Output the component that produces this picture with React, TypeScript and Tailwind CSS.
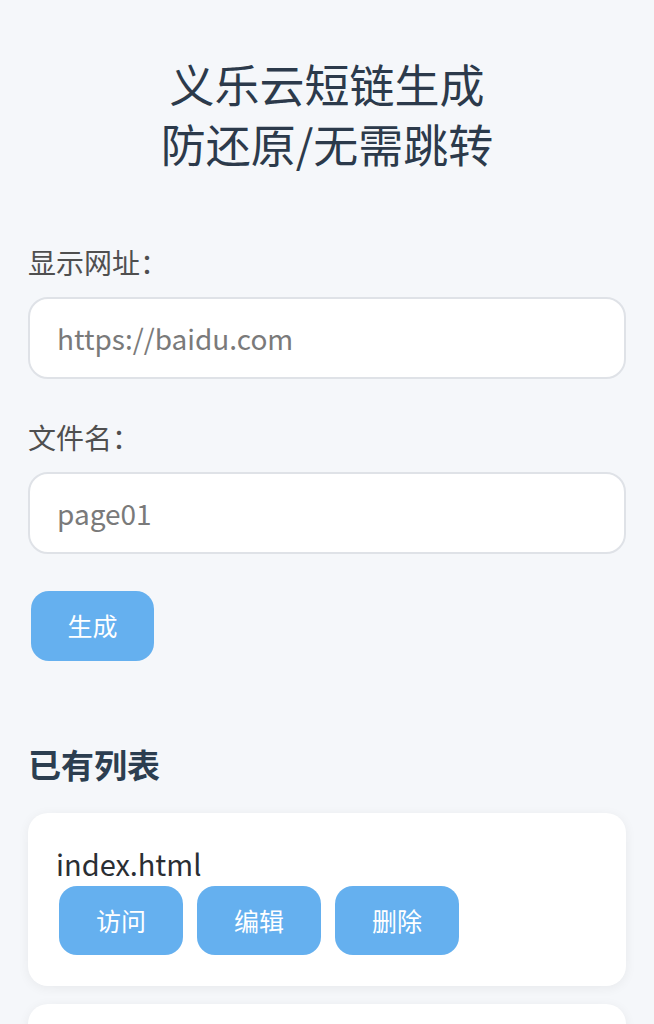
import React from "react";

const font = {
  fontFamily: '"Noto Sans CJK SC", "Noto Sans", sans-serif',
};

const files = ["index.html", "page01.html"];

const Field = ({ label, placeholder }: { label: string; placeholder: string }) => (
  <div className="flex flex-col">
    <label className="text-[28px] leading-[40px] text-[#4f4f4f]">{label}</label>
    <input
      className="mt-[15px] h-[82px] w-full rounded-[20px] border-2 border-[#dfe2e7] bg-white px-[27px] text-[28px] text-[#333] placeholder:text-[#7a7a7a] outline-none"
      type="text"
      placeholder={placeholder}
    />
  </div>
);

const BlueButton = ({ children }: { children: React.ReactNode }) => (
  <button className="h-[69px] w-[124px] rounded-[18px] bg-[#65b0ef] text-[25px] text-white">
    {children}
  </button>
);

export default function App() {
  return (
    <div className="min-h-[1024px] bg-[#f5f7fa] px-[28px] pt-[54px]" style={font}>
      {/* title */}
      <h1 className="text-center text-[45px] leading-[60px] text-[#2c3a4b]">
        义乐云短链生成
        <br />
        防还原/无需跳转
      </h1>

      {/* form */}
      <div className="mt-[68px] flex flex-col gap-[38px]">
        <Field label="显示网址：" placeholder="https://baidu.com" />
        <Field label="文件名：" placeholder="page01" />
      </div>
      <div className="mt-[37px] pl-[3px]">
        <button className="h-[70px] w-[123px] rounded-[18px] bg-[#65b0ef] text-[25px] text-white">
          生成
        </button>
      </div>

      {/* list */}
      <h2 className="mt-[81px] text-[33px] font-bold leading-[44px] text-[#2c3e50]">已有列表</h2>
      <div className="mt-[27px] flex flex-col gap-[18px]">
        {files.map((name) => (
          <div
            key={name}
            className="rounded-[20px] bg-white px-[28px] pb-[31px] pt-[30px] shadow-[0_2px_12px_rgba(0,0,0,0.06)]"
          >
            <p className="text-[29px] leading-[40px] text-[#2a2e33]">{name}</p>
            <div className="mt-[3px] flex gap-[14px] pl-[3px]">
              <BlueButton>访问</BlueButton>
              <BlueButton>编辑</BlueButton>
              <BlueButton>删除</BlueButton>
            </div>
          </div>
        ))}
      </div>
    </div>
  );
}
